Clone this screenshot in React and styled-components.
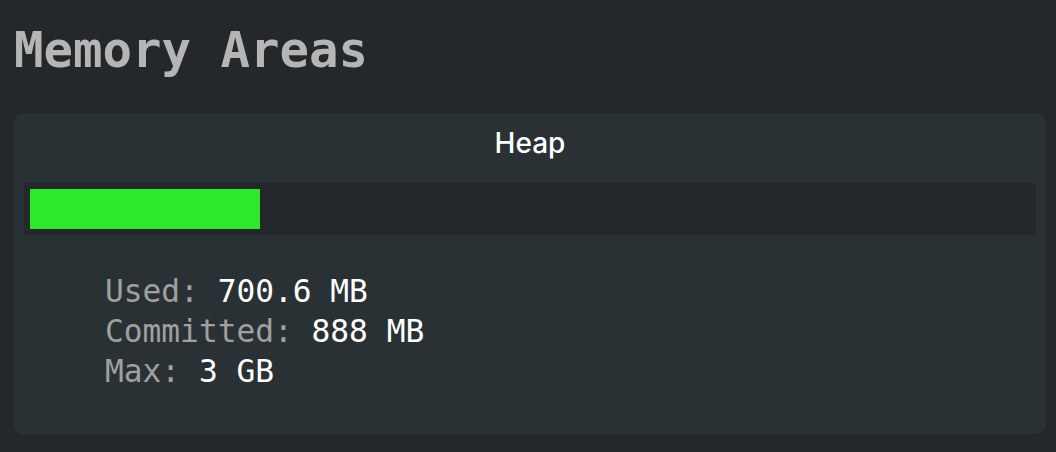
import React from "react";
import styled, { createGlobalStyle } from "styled-components";

const GlobalStyle = createGlobalStyle`
  html, body {
    margin: 0;
    padding: 0;
    background: #24282b;
  }
`;

const heap = {
  name: "Heap",
  used: 700.6,
  committed: 888,
  max: 3046,
};

const MemoryAreas = () => {
  const pct = (heap.used / heap.max) * 100;

  return (
    <Main>
      <GlobalStyle />
      <Title>Memory Areas</Title>
      <Card>
        <CardTitle>{heap.name}</CardTitle>
        <Track>
          <Fill style={{ width: `${pct}%` }} />
        </Track>
        <Stats>
          <Row>
            <Label>Used:</Label> <Value>700.6 MB</Value>
          </Row>
          <Row>
            <Label>Committed:</Label> <Value>888 MB</Value>
          </Row>
          <Row>
            <Label>Max:</Label> <Value>3 GB</Value>
          </Row>
        </Stats>
      </Card>
    </Main>
  );
};

const Main = styled.main`
  padding: 22px 10px 0 14px;
  font-family: "DejaVu Sans Mono", "Liberation Mono", monospace;
`;

const Title = styled.h1`
  margin: 0 0 33px;
  font-size: 49px;
  line-height: 58px;
  font-weight: 700;
  color: #b5b5b5;
`;

const Card = styled.section`
  background: #2a3134;
  border-radius: 9px;
  padding: 13px 10px 43px;
`;

const CardTitle = styled.h2`
  margin: 0 0 23px;
  text-align: center;
  font-family: "Inter", "Noto Sans", sans-serif;
  font-weight: 500;
  font-size: 28px;
  line-height: 34px;
  color: #ffffff;
`;

const Track = styled.div`
  background: #24282b;
  padding: 6px;
  height: 40px;
`;

const Fill = styled.div`
  height: 100%;
  background: #2de82d;
`;

const Stats = styled.div`
  margin-top: 36px;
  padding-left: 81px;
`;

const Row = styled.div`
  font-size: 31.2px;
  line-height: 40px;
  white-space: pre;
`;

const Label = styled.span`
  color: #a0a0a0;
`;

const Value = styled.span`
  color: #ffffff;
`;

export default MemoryAreas;
